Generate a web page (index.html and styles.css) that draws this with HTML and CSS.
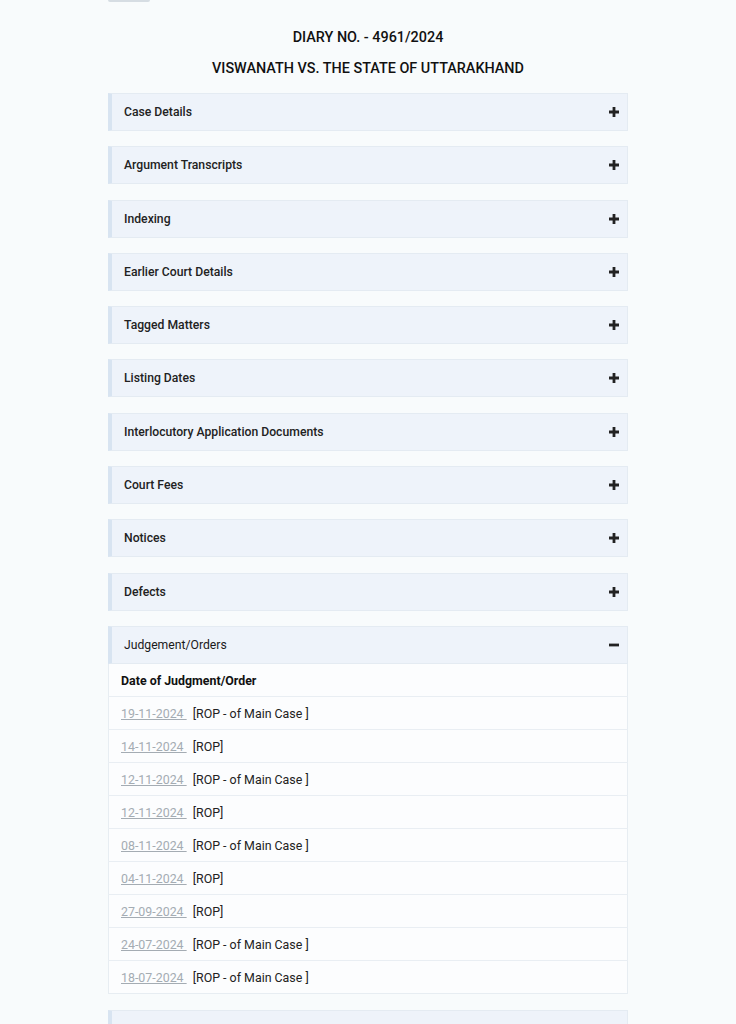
FILE: index.html
```html
<!DOCTYPE html>
<html lang="en">
<head>
    <meta charset="UTF-8">
    <meta name="viewport" content="width=device-width, initial-scale=1.0">
    <title>Case Status - Diary No. 4961/2024</title>
    <link rel="stylesheet" href="styles.css">
</head>
<body>
    <div class="page">
        <div class="back-edge"></div>

        <div class="case-title">
            <h3>DIARY NO. - 4961/2024</h3>
            <h4>VISWANATH VS. THE STATE OF UTTARAKHAND</h4>
        </div>

        <div class="accordion">
            <div class="panel">
                <div class="panel-head"><span>Case Details</span><svg class="toggle" viewBox="0 0 10 10"><path d="M5 0v10M0 5h10"/></svg></div>
            </div>
            <div class="panel">
                <div class="panel-head"><span>Argument Transcripts</span><svg class="toggle" viewBox="0 0 10 10"><path d="M5 0v10M0 5h10"/></svg></div>
            </div>
            <div class="panel">
                <div class="panel-head"><span>Indexing</span><svg class="toggle" viewBox="0 0 10 10"><path d="M5 0v10M0 5h10"/></svg></div>
            </div>
            <div class="panel">
                <div class="panel-head"><span>Earlier Court Details</span><svg class="toggle" viewBox="0 0 10 10"><path d="M5 0v10M0 5h10"/></svg></div>
            </div>
            <div class="panel">
                <div class="panel-head"><span>Tagged Matters</span><svg class="toggle" viewBox="0 0 10 10"><path d="M5 0v10M0 5h10"/></svg></div>
            </div>
            <div class="panel">
                <div class="panel-head"><span>Listing Dates</span><svg class="toggle" viewBox="0 0 10 10"><path d="M5 0v10M0 5h10"/></svg></div>
            </div>
            <div class="panel">
                <div class="panel-head"><span>Interlocutory Application Documents</span><svg class="toggle" viewBox="0 0 10 10"><path d="M5 0v10M0 5h10"/></svg></div>
            </div>
            <div class="panel">
                <div class="panel-head"><span>Court Fees</span><svg class="toggle" viewBox="0 0 10 10"><path d="M5 0v10M0 5h10"/></svg></div>
            </div>
            <div class="panel">
                <div class="panel-head"><span>Notices</span><svg class="toggle" viewBox="0 0 10 10"><path d="M5 0v10M0 5h10"/></svg></div>
            </div>
            <div class="panel">
                <div class="panel-head"><span>Defects</span><svg class="toggle" viewBox="0 0 10 10"><path d="M5 0v10M0 5h10"/></svg></div>
            </div>

            <div class="panel open">
                <div class="panel-head"><span class="light">Judgement/Orders</span><svg class="toggle" viewBox="0 0 10 10"><path d="M0 5h10"/></svg></div>
                <table class="orders">
                    <tr><th>Date of Judgment/Order</th></tr>
                    <tr><td><a href="#">19-11-2024&nbsp;</a>&nbsp; [ROP - of Main Case ]</td></tr>
                    <tr><td><a href="#">14-11-2024&nbsp;</a>&nbsp; [ROP]</td></tr>
                    <tr><td><a href="#">12-11-2024&nbsp;</a>&nbsp; [ROP - of Main Case ]</td></tr>
                    <tr><td><a href="#">12-11-2024&nbsp;</a>&nbsp; [ROP]</td></tr>
                    <tr><td><a href="#">08-11-2024&nbsp;</a>&nbsp; [ROP - of Main Case ]</td></tr>
                    <tr><td><a href="#">04-11-2024&nbsp;</a>&nbsp; [ROP]</td></tr>
                    <tr><td><a href="#">27-09-2024&nbsp;</a>&nbsp; [ROP]</td></tr>
                    <tr><td><a href="#">24-07-2024&nbsp;</a>&nbsp; [ROP - of Main Case ]</td></tr>
                    <tr><td><a href="#">18-07-2024&nbsp;</a>&nbsp; [ROP - of Main Case ]</td></tr>
                </table>
            </div>

            <div class="panel">
                <div class="panel-head"><span>Mention Memo</span><svg class="toggle" viewBox="0 0 10 10"><path d="M5 0v10M0 5h10"/></svg></div>
            </div>
        </div>
    </div>
</body>
</html>
```

FILE: styles.css
```css
* {
    margin: 0;
    padding: 0;
    box-sizing: border-box;
    font-family: 'Roboto', sans-serif;
}

body {
    background-color: #f8fbfc;
    color: #222;
}

.page {
    width: 520px;
    margin: 0 auto;
    padding-bottom: 40px;
}

/* bottom edge of the back button, scrolled mostly out of view */
.back-edge {
    width: 42px;
    height: 2px;
    background-color: #d6dde3;
    border-radius: 0 0 3px 3px;
}

.case-title {
    text-align: center;
    padding: 27px 0 16px;
}

.case-title h3,
.case-title h4 {
    font-size: 14.4px;
    font-weight: 500;
    color: #111;
}

.case-title h3 {
    margin-bottom: 14px;
}

.accordion {
    display: flex;
    flex-direction: column;
    gap: 15.3px;
}

.panel-head {
    display: flex;
    justify-content: space-between;
    align-items: center;
    height: 38px;
    padding: 0 8px 0 12px;
    background-color: #eef3fa;
    border: 1px solid #e4ebf2;
    border-left: 4px solid #d8e4f1;
    font-size: 12.2px;
    font-weight: 500;
    color: #222;
}

.panel-head .light {
    font-weight: 400;
    color: #1a1a1a;
}

.toggle {
    width: 10px;
    height: 10px;
    stroke: #222;
    stroke-width: 2.8;
    fill: none;
}

.orders {
    width: 100%;
    border-collapse: collapse;
    background-color: #fcfdfe;
    border: 1px solid #e7edf2;
    border-top: none;
    font-size: 12.4px;
}

.orders th,
.orders td {
    height: 33px;
    padding: 0 12px;
    text-align: left;
    border-top: 1px solid #e9eef3;
}

.orders th {
    font-weight: 700;
    color: #111;
    border-top: none;
}

.orders td {
    color: #222;
}

.orders a {
    color: #a4acb3;
    text-decoration: underline;
}
```
